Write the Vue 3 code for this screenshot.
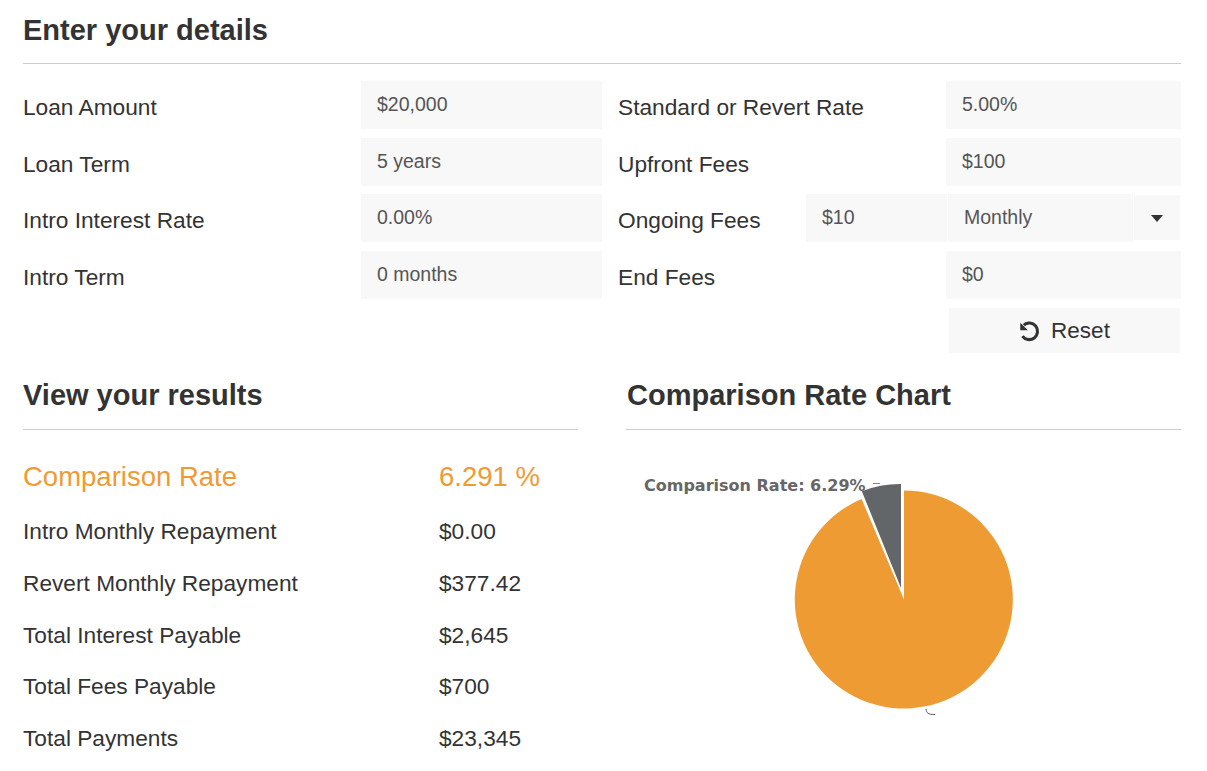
<script setup>
const leftFields = [
  { label: 'Loan Amount', value: '$20,000' },
  { label: 'Loan Term', value: '5 years' },
  { label: 'Intro Interest Rate', value: '0.00%' },
  { label: 'Intro Term', value: '0 months' },
]
const results = [
  { label: 'Intro Monthly Repayment', value: '$0.00' },
  { label: 'Revert Monthly Repayment', value: '$377.42' },
  { label: 'Total Interest Payable', value: '$2,645' },
  { label: 'Total Fees Payable', value: '$700' },
  { label: 'Total Payments', value: '$23,345' },
]
</script>

<template>
  <main class="page">
    <h2 class="title first">Enter your details</h2>
    <section class="form">
      <div class="col left">
        <div v-for="f in leftFields" :key="f.label" class="row">
          <span class="label">{{ f.label }}</span>
          <div class="input wide">{{ f.value }}</div>
        </div>
      </div>
      <div class="col right">
        <div class="row">
          <span class="label">Standard or Revert Rate</span>
          <div class="input narrow">5.00%</div>
        </div>
        <div class="row">
          <span class="label">Upfront Fees</span>
          <div class="input narrow">$100</div>
        </div>
        <div class="row">
          <span class="label">Ongoing Fees</span>
          <div class="combo">
            <div class="input amount">$10</div>
            <div class="input freq">Monthly</div>
            <div class="caret"><i></i></div>
          </div>
        </div>
        <div class="row">
          <span class="label">End Fees</span>
          <div class="input narrow">$0</div>
        </div>
        <div class="reset-row">
          <button class="reset" type="button">
            <svg width="24" height="24" viewBox="0 0 22 22" fill="none" stroke="#333" stroke-width="2.8">
              <path d="M6.2 5.6A7.6 7.6 0 1 1 5 15.6" />
              <path d="M3 3.400v7h7z" fill="#333" stroke="none" />
            </svg>
            <span>Reset</span>
          </button>
        </div>
      </div>
    </section>

    <section class="bottom">
      <div class="results">
        <h2 class="title">View your results</h2>
        <div class="result headline">
          <span>Comparison Rate</span>
          <span>6.291 %</span>
        </div>
        <div v-for="r in results" :key="r.label" class="result">
          <span>{{ r.label }}</span>
          <span>{{ r.value }}</span>
        </div>
      </div>
      <div class="chart">
        <h2 class="title">Comparison Rate Chart</h2>
        <svg class="pie" width="555" height="300" viewBox="626 465 555 300">
          <path d="M904 599.5V490.5A109 109 0 1 1 861.6 499Z" fill="#ef9b33" />
          <path d="M901 588V484A105 105 0 0 0 861.8 491.2Z" fill="#636669" />
          <text x="644" y="491" class="pie-label">Comparison Rate: 6.29%</text>
          <path d="M873 483.5h7" stroke="#888" stroke-width="1" fill="none" />
          <path d="M926 709c0.5 4 2 5.500 9 5.500" stroke="#555" stroke-width="1" fill="none" />
        </svg>
      </div>
    </section>
  </main>
</template>

<style scoped>
.page {
  width: 1207px;
  height: 771px;
  box-sizing: border-box;
  padding: 0 26px 0 23px;
  overflow: hidden;
  font-family: "Liberation Sans", Arial, sans-serif;
  color: #333;
  background: #fff;
}
.title {
  margin: 0;
  padding-top: 13px;
  box-sizing: content-box;
  font-size: 29px;
  line-height: 34px;
  font-weight: 700;
  color: #333;
  border-bottom: 1px solid #ccc;
}
.title.first {
  height: 50px;
  padding-top: 13px;
}
.form {
  display: flex;
  margin-top: 17px;
}
.col {
  display: flex;
  flex-direction: column;
  gap: 8.67px;
}
.left {
  width: 595px;
  flex: none;
}
.right {
  flex: 1;
}
.row {
  display: flex;
  align-items: center;
  justify-content: space-between;
  height: 48px;
}
.label {
  flex: none;
  font-size: 22.700px;
  padding-top: 5px;
  color: #333;
  white-space: nowrap;
}
.input {
  height: 48px;
  box-sizing: border-box;
  padding: 0 16px 1px;
  display: flex;
  align-items: center;
  background: #f8f8f8;
  font-size: 19.500px;
  color: #555;
}
.wide {
  width: 241px;
  margin-right: 16px;
}
.narrow {
  width: 235px;
}
.combo {
  display: flex;
  width: 375px;
}
.amount {
  width: 141px;
  margin-right: 1px;
}
.freq {
  width: 185px;
  padding-left: 16px;
}
.caret {
  width: 46px;
  height: 45px;
  margin-left: 1px;
  margin-top: 1px;
  background: #f8f8f8;
  display: flex;
  align-items: center;
  justify-content: center;
}
.caret i {
  border-left: 6.500px solid transparent;
  border-right: 6.500px solid transparent;
  border-top: 7px solid #333;
  margin-top: 1px;
}
.reset-row {
  display: flex;
  justify-content: flex-end;
  padding-right: 1px;
}
.reset {
  width: 231px;
  height: 45px;
  border: 0;
  background: #f8f8f8;
  display: flex;
  align-items: center;
  justify-content: center;
  gap: 10px;
  font-family: inherit;
  font-size: 22.500px;
  color: #333;
  padding: 1px 2px 0 0;
}
.bottom {
  display: flex;
  justify-content: space-between;
}
.results,
.chart {
  width: 555px;
}
.bottom .title {
  height: 51px;
  padding-top: 25px;
}
.chart .title {
  padding-left: 1px;
  width: 554px;
}
.result {
  display: flex;
  align-items: center;
  height: 51.800px;
  font-size: 22.700px;
  color: #333;
}
.result span:first-child {
  width: 416px;
}
.headline {
  height: 57px;
  padding-top: 1px;
  margin-top: 18px;
  font-size: 27.500px;
  color: #ef9b33;
}
.pie {
  display: block;
  margin-top: 35px;
}
.pie-label {
  font-family: "DejaVu Sans", Verdana, sans-serif;
  font-weight: 700;
  font-size: 16px;
  fill: #666;
}
</style>
